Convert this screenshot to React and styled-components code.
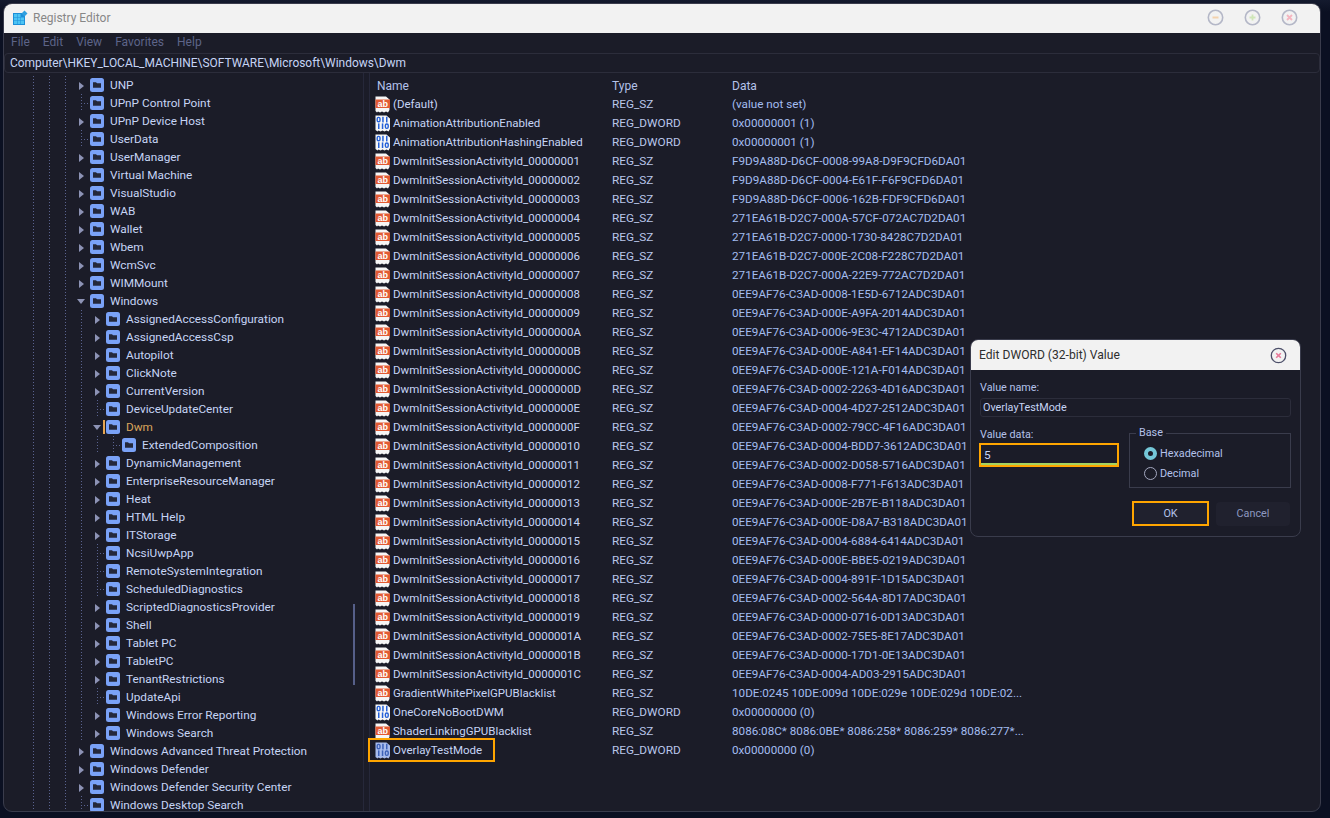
import React from 'react';
import styled, { createGlobalStyle } from 'styled-components';

const GlobalStyle = createGlobalStyle`
  html, body {
    margin: 0;
    height: 100%;
    overflow: hidden;
    background: #0b1022;
  }
  *, *::before, *::after {
    box-sizing: border-box;
  }
`;

const tree = [
  { name: 'UNP', level: 0, arrow: true },
  { name: 'UPnP Control Point', level: 0 },
  { name: 'UPnP Device Host', level: 0, arrow: true },
  { name: 'UserData', level: 0 },
  { name: 'UserManager', level: 0, arrow: true },
  { name: 'Virtual Machine', level: 0, arrow: true },
  { name: 'VisualStudio', level: 0, arrow: true },
  { name: 'WAB', level: 0, arrow: true },
  { name: 'Wallet', level: 0, arrow: true },
  { name: 'Wbem', level: 0, arrow: true },
  { name: 'WcmSvc', level: 0, arrow: true },
  { name: 'WIMMount', level: 0, arrow: true },
  { name: 'Windows', level: 0, open: true },
  { name: 'AssignedAccessConfiguration', level: 1, arrow: true },
  { name: 'AssignedAccessCsp', level: 1, arrow: true },
  { name: 'Autopilot', level: 1, arrow: true },
  { name: 'ClickNote', level: 1, arrow: true },
  { name: 'CurrentVersion', level: 1, arrow: true },
  { name: 'DeviceUpdateCenter', level: 1 },
  { name: 'Dwm', level: 1, open: true, active: true },
  { name: 'ExtendedComposition', level: 2 },
  { name: 'DynamicManagement', level: 1, arrow: true },
  { name: 'EnterpriseResourceManager', level: 1, arrow: true },
  { name: 'Heat', level: 1, arrow: true },
  { name: 'HTML Help', level: 1, arrow: true },
  { name: 'ITStorage', level: 1, arrow: true },
  { name: 'NcsiUwpApp', level: 1 },
  { name: 'RemoteSystemIntegration', level: 1 },
  { name: 'ScheduledDiagnostics', level: 1 },
  { name: 'ScriptedDiagnosticsProvider', level: 1, arrow: true },
  { name: 'Shell', level: 1, arrow: true },
  { name: 'Tablet PC', level: 1, arrow: true },
  { name: 'TabletPC', level: 1, arrow: true },
  { name: 'TenantRestrictions', level: 1, arrow: true },
  { name: 'UpdateApi', level: 1 },
  { name: 'Windows Error Reporting', level: 1, arrow: true },
  { name: 'Windows Search', level: 1, arrow: true },
  { name: 'Windows Advanced Threat Protection', level: 0, arrow: true },
  { name: 'Windows Defender', level: 0, arrow: true },
  { name: 'Windows Defender Security Center', level: 0, arrow: true },
  { name: 'Windows Desktop Search', level: 0 },
];

const session = [
  ['00000001', 'F9D9A88D-D6CF-0008-99A8-D9F9CFD6DA01'],
  ['00000002', 'F9D9A88D-D6CF-0004-E61F-F6F9CFD6DA01'],
  ['00000003', 'F9D9A88D-D6CF-0006-162B-FDF9CFD6DA01'],
  ['00000004', '271EA61B-D2C7-000A-57CF-072AC7D2DA01'],
  ['00000005', '271EA61B-D2C7-0000-1730-8428C7D2DA01'],
  ['00000006', '271EA61B-D2C7-000E-2C08-F228C7D2DA01'],
  ['00000007', '271EA61B-D2C7-000A-22E9-772AC7D2DA01'],
  ['00000008', '0EE9AF76-C3AD-0008-1E5D-6712ADC3DA01'],
  ['00000009', '0EE9AF76-C3AD-000E-A9FA-2014ADC3DA01'],
  ['0000000A', '0EE9AF76-C3AD-0006-9E3C-4712ADC3DA01'],
  ['0000000B', '0EE9AF76-C3AD-000E-A841-EF14ADC3DA01'],
  ['0000000C', '0EE9AF76-C3AD-000E-121A-F014ADC3DA01'],
  ['0000000D', '0EE9AF76-C3AD-0002-2263-4D16ADC3DA01'],
  ['0000000E', '0EE9AF76-C3AD-0004-4D27-2512ADC3DA01'],
  ['0000000F', '0EE9AF76-C3AD-0002-79CC-4F16ADC3DA01'],
  ['00000010', '0EE9AF76-C3AD-0004-BDD7-3612ADC3DA01'],
  ['00000011', '0EE9AF76-C3AD-0002-D058-5716ADC3DA01'],
  ['00000012', '0EE9AF76-C3AD-0008-F771-F613ADC3DA01'],
  ['00000013', '0EE9AF76-C3AD-000E-2B7E-B118ADC3DA01'],
  ['00000014', '0EE9AF76-C3AD-000E-D8A7-B318ADC3DA01'],
  ['00000015', '0EE9AF76-C3AD-0004-6884-6414ADC3DA01'],
  ['00000016', '0EE9AF76-C3AD-000E-BBE5-0219ADC3DA01'],
  ['00000017', '0EE9AF76-C3AD-0004-891F-1D15ADC3DA01'],
  ['00000018', '0EE9AF76-C3AD-0002-564A-8D17ADC3DA01'],
  ['00000019', '0EE9AF76-C3AD-0000-0716-0D13ADC3DA01'],
  ['0000001A', '0EE9AF76-C3AD-0002-75E5-8E17ADC3DA01'],
  ['0000001B', '0EE9AF76-C3AD-0000-17D1-0E13ADC3DA01'],
  ['0000001C', '0EE9AF76-C3AD-0004-AD03-2915ADC3DA01'],
];

const values = [
  { name: '(Default)', type: 'REG_SZ', data: '(value not set)' },
  { name: 'AnimationAttributionEnabled', type: 'REG_DWORD', data: '0x00000001 (1)' },
  { name: 'AnimationAttributionHashingEnabled', type: 'REG_DWORD', data: '0x00000001 (1)' },
  ...session.map(([id, data]) => ({
    name: `DwmInitSessionActivityId_${id}`,
    type: 'REG_SZ',
    data,
  })),
  {
    name: 'GradientWhitePixelGPUBlacklist',
    type: 'REG_SZ',
    data: '10DE:0245 10DE:009d 10DE:029e 10DE:029d 10DE:02...',
  },
  { name: 'OneCoreNoBootDWM', type: 'REG_DWORD', data: '0x00000000 (0)' },
  {
    name: 'ShaderLinkingGPUBlacklist',
    type: 'REG_SZ',
    data: '8086:08C* 8086:0BE* 8086:258* 8086:259* 8086:277*...',
  },
  { name: 'OverlayTestMode', type: 'REG_DWORD', data: '0x00000000 (0)', selected: true },
];

const AppIcon = () => (
  <svg width="16" height="16" viewBox="0 0 16 16">
    <rect x="1" y="3" width="12" height="12" fill="#1c8fd8" />
    <g fill="#4cc4f4">
      <rect x="2" y="4" width="3" height="3" />
      <rect x="5.5" y="4" width="3" height="3" />
      <rect x="2" y="7.5" width="3" height="3" />
      <rect x="5.5" y="7.5" width="3" height="3" />
      <rect x="9" y="7.5" width="3" height="3" />
      <rect x="2" y="11" width="3" height="3" />
      <rect x="5.5" y="11" width="3" height="3" />
      <rect x="9" y="11" width="3" height="3" />
    </g>
    <path d="M12.5 0.5l3 3-3 3-3-3z" fill="#2f9fe0" />
  </svg>
);

const FolderIcon = () => (
  <svg width="14" height="14" viewBox="0 0 14 14">
    <rect x="0" y="0" width="14" height="14" rx="2.5" fill="#7aa2f7" />
    <path d="M3 4.2h3l1 1h4v4.6H3z" fill="#24283b" />
  </svg>
);

const StringIcon = () => (
  <svg width="16" height="17" viewBox="0 0 16 17">
    <path d="M0.5 0.5h10.5l3.5 3V14l-1.5 2.5-2-1-2 1-2-1-2 1-2-1-1 1-1.5-1.5z" fill="#f6f6f6" />
    <rect x="0.5" y="3.5" width="14.5" height="8.5" fill="#e25a33" />
    <AbLabel x="7.8" y="10.6">ab</AbLabel>
  </svg>
);

const BinaryIcon = ({ selected }) => {
  const ink = selected ? '#3d62b8' : '#2460d8';
  return (
    <svg width="16" height="17" viewBox="0 0 16 17">
      <path
        d="M0.5 0.5h11l3.5 3V14l-1.5 2.5-2-1-2 1-2-1-2 1-2-1-1 1-2-1.5z"
        fill={selected ? '#a8bcec' : '#f6f6f6'}
      />
      <g fill="none" stroke={ink} strokeWidth="1.4">
        <rect x="2.2" y="2.4" width="2.8" height="4.4" rx="1.3" />
        <rect x="10.4" y="9" width="2.8" height="4.4" rx="1.3" />
      </g>
      <g fill={ink}>
        <rect x="7.2" y="1.8" width="1.5" height="5.6" />
        <rect x="11" y="1.8" width="1.5" height="5.6" />
        <rect x="3" y="8.4" width="1.5" height="5.6" />
        <rect x="6.8" y="8.4" width="1.5" height="5.6" />
      </g>
    </svg>
  );
};

const WindowButton = ({ kind }) => (
  <svg width="17" height="17" viewBox="0 0 17 17">
    <circle cx="8.5" cy="8.5" r="7.2" fill="none" stroke="#b4b7c7" strokeWidth="1.6" />
    {kind === 'min' && <path d="M5.5 8.5h6" stroke="#f3d2ad" strokeWidth="1.8" />}
    {kind === 'max' && <path d="M5.5 8.5h6M8.5 5.5v6" stroke="#cfe6b8" strokeWidth="1.8" />}
    {kind === 'close' && <path d="M6 6l5 5M11 6l-5 5" stroke="#f5b5c0" strokeWidth="1.8" />}
  </svg>
);

const DialogClose = () => (
  <svg width="17" height="17" viewBox="0 0 17 17">
    <circle cx="8.5" cy="8.5" r="7.2" fill="none" stroke="#4c4f69" strokeWidth="1.3" />
    <path d="M6.2 6.2l4.6 4.6M10.8 6.2l-4.6 4.6" stroke="#e8799a" strokeWidth="1.6" />
  </svg>
);

const TreeItem = ({ item }) => {
  const guides = Array.from({ length: item.level + 3 });
  return (
    <TreeRow>
      {guides.map((_, i) => (
        <Guide key={i} />
      ))}
      {item.arrow && (
        <Expander>
          <ClosedArrow />
        </Expander>
      )}
      {item.open && (
        <Expander>
          <OpenArrow />
        </Expander>
      )}
      {!item.arrow && !item.open && <Branch />}
      <FolderSlot $active={item.active}>
        <FolderIcon />
      </FolderSlot>
      <TreeLabel $active={item.active}>{item.name}</TreeLabel>
    </TreeRow>
  );
};

export default function App() {
  return (
    <Desktop>
      <GlobalStyle />
      <Window>
        <TitleBar>
          <AppIcon />
          <TitleText>Registry Editor</TitleText>
          <WindowButtons>
            <WindowButton kind="min" />
            <WindowButton kind="max" />
            <WindowButton kind="close" />
          </WindowButtons>
        </TitleBar>
        <MenuBar>
          <MenuItem>File</MenuItem>
          <MenuItem>Edit</MenuItem>
          <MenuItem>View</MenuItem>
          <MenuItem>Favorites</MenuItem>
          <MenuItem>Help</MenuItem>
        </MenuBar>
        <AddressBar>Computer\HKEY_LOCAL_MACHINE\SOFTWARE\Microsoft\Windows\Dwm</AddressBar>
        <Panes>
          <TreePane>
            {tree.map((item) => (
              <TreeItem key={item.name} item={item} />
            ))}
            <TreeScrollThumb />
          </TreePane>
          <ListPane>
            <ListHeader>
              <HeaderName>Name</HeaderName>
              <span>Type</span>
              <span>Data</span>
            </ListHeader>
            {values.map((value) => (
              <ValueRow key={value.name}>
                <ValueName $selected={value.selected}>
                  <ValueIcon>
                    {value.type === 'REG_SZ' ? (
                      <StringIcon />
                    ) : (
                      <BinaryIcon selected={value.selected} />
                    )}
                  </ValueIcon>
                  {value.name}
                </ValueName>
                <ValueType>{value.type}</ValueType>
                <ValueData>{value.data}</ValueData>
              </ValueRow>
            ))}
          </ListPane>
        </Panes>
        <Dialog>
          <DialogTitle>
            Edit DWORD (32-bit) Value
            <DialogClose />
          </DialogTitle>
          <DialogBody>
            <FieldLabel>Value name:</FieldLabel>
            <NameField>OverlayTestMode</NameField>
            <DataRow>
              <DataColumn>
                <FieldLabel>Value data:</FieldLabel>
                <DataField>5</DataField>
              </DataColumn>
              <BaseGroup>
                <BaseLegend>Base</BaseLegend>
                <RadioRow>
                  <Radio $checked />
                  Hexadecimal
                </RadioRow>
                <RadioRow>
                  <Radio />
                  Decimal
                </RadioRow>
              </BaseGroup>
            </DataRow>
            <DialogActions>
              <OkButton>OK</OkButton>
              <CancelButton>Cancel</CancelButton>
            </DialogActions>
          </DialogBody>
        </Dialog>
      </Window>
    </Desktop>
  );
}

const uiFont = `Roboto, "Open Sans", "Liberation Sans", sans-serif`;

const Desktop = styled.div`
  width: 1330px;
  height: 818px;
  padding: 3px 9px 6px 3px;
  background: linear-gradient(180deg, #141a2e 0, #0b1022 12px);
  font-family: ${uiFont};
  font-size: 11.8px;
`;

const Window = styled.div`
  position: relative;
  height: 100%;
  display: flex;
  flex-direction: column;
  background: #1b1c28;
  border: 1px solid #3a3c4c;
  border-radius: 9px;
  overflow: hidden;
`;

const TitleBar = styled.div`
  flex: none;
  height: 29px;
  display: flex;
  align-items: center;
  gap: 5px;
  padding: 0 0 2px 8px;
  background: #f2f2f2;
`;

const TitleText = styled.span`
  color: #878787;
  font-size: 12px;
`;

const WindowButtons = styled.div`
  margin-left: auto;
  margin-right: 22px;
  display: flex;
  gap: 20px;
`;

const MenuBar = styled.div`
  flex: none;
  height: 20px;
  display: flex;
  align-items: center;
  gap: 13px;
  padding: 0 0 2px 7px;
`;

const MenuItem = styled.span`
  color: #5d6488;
  font-size: 12px;
`;

const AddressBar = styled.div`
  flex: none;
  height: 20px;
  line-height: 19px;
  padding-left: 5px;
  color: #c6d4f5;
  font-size: 11.95px;
  border: 1px solid #2c2d3b;
  border-radius: 4px;
`;

const Panes = styled.div`
  flex: 1;
  min-height: 0;
  display: grid;
  grid-template-columns: 360px 1fr;
  column-gap: 5px;
`;

const TreePane = styled.div`
  position: relative;
  overflow: hidden;
  padding: 3px 0 0 21px;
  border-right: 1px solid #26283a;
`;

const TreeScrollThumb = styled.div`
  position: absolute;
  top: 531px;
  right: 8px;
  width: 2px;
  height: 81px;
  background: #565f89;
`;

const TreeRow = styled.div`
  display: flex;
  align-items: center;
  height: 18px;
`;

const dots = `repeating-linear-gradient(180deg, #5a6390 0 1px, transparent 1px 3px)`;

const Guide = styled.span`
  flex: none;
  width: 16px;
  height: 18px;
  background: ${dots} 8px 0 / 1px 100% no-repeat;
`;

const Expander = styled.span`
  flex: none;
  width: 16px;
  height: 18px;
  display: flex;
  align-items: center;
  justify-content: center;
`;

const ClosedArrow = styled.span`
  width: 0;
  height: 0;
  margin-top: 2px;
  border-left: 5px solid #8d93b5;
  border-top: 4px solid transparent;
  border-bottom: 4px solid transparent;
`;

const OpenArrow = styled.span`
  width: 0;
  height: 0;
  border-top: 5px solid #8d93b5;
  border-left: 4px solid transparent;
  border-right: 4px solid transparent;
`;

const Branch = styled.span`
  flex: none;
  width: 16px;
  height: 18px;
  background:
    ${dots} 8px 0 / 1px 100% no-repeat,
    repeating-linear-gradient(90deg, #5a6390 0 1px, transparent 1px 3px) 8px 9px / 8px 1px no-repeat;
`;

const FolderSlot = styled.span`
  position: relative;
  flex: none;
  display: flex;
  margin-left: 1px;

  &::before {
    content: ${(p) => (p.$active ? '""' : 'none')};
    position: absolute;
    left: -3px;
    top: 0;
    width: 2px;
    height: 14px;
    background: #e8a64f;
  }
`;

const TreeLabel = styled.span`
  margin-left: 6px;
  white-space: nowrap;
  color: ${(p) => (p.$active ? '#d9a45c' : '#c6d4f5')};
`;

const ListPane = styled.div`
  padding: 3px 0 0 5px;
  border-left: 1px solid #26283a;
`;

const ListHeader = styled.div`
  display: grid;
  grid-template-columns: 237px 120px 1fr;
  align-items: center;
  height: 19px;
  color: #b4c2ea;
  font-size: 12px;
`;

const HeaderName = styled.span`
  padding-left: 2px;
`;

const ValueRow = styled.div`
  display: grid;
  grid-template-columns: 237px 120px 1fr;
  align-items: center;
  height: 19px;
  padding-bottom: 2px;
  white-space: nowrap;
`;

const ValueName = styled.span`
  position: relative;
  display: flex;
  align-items: center;
  gap: 2px;
  color: #c6d4f5;
  font-size: 11.5px;

  &::after {
    content: ${(p) => (p.$selected ? '""' : 'none')};
    position: absolute;
    left: -7px;
    top: -3px;
    width: 127px;
    height: 24px;
    border: 2px solid #ffa500;
  }
`;

const ValueIcon = styled.span`
  flex: none;
  display: flex;
  margin: 1px 0 -1px;
`;

const AbLabel = styled.text`
  font-family: "Liberation Sans", sans-serif;
  font-size: 9px;
  font-weight: 700;
  fill: #fff;
  text-anchor: middle;
`;

const ValueType = styled.span`
  color: #b9c6ea;
`;

const ValueData = styled.span`
  color: #a3bcf0;
  font-size: 11.7px;
`;

const Dialog = styled.div`
  position: absolute;
  left: 966px;
  top: 335px;
  width: 331px;
  height: 198px;
  display: flex;
  flex-direction: column;
  background: #1b1c28;
  border: 1px solid #3a3c4c;
  border-radius: 8px;
  overflow: hidden;
  font-size: 10.8px;
`;

const DialogTitle = styled.div`
  flex: none;
  height: 30px;
  display: flex;
  align-items: center;
  justify-content: space-between;
  padding: 0 13px 0 8px;
  background: #f2f2f2;
  color: #2e2e2e;
  font-size: 12.1px;
`;

const DialogBody = styled.div`
  flex: 1;
  display: flex;
  flex-direction: column;
  padding: 10px 9px 0 9px;
`;

const FieldLabel = styled.div`
  color: #b4c2ea;
  line-height: 16px;
`;

const NameField = styled.div`
  height: 19px;
  margin-top: 2px;
  padding-left: 2px;
  line-height: 18px;
  color: #c6d4f5;
  border: 1px solid #2c2d3b;
  border-radius: 3px;
`;

const DataRow = styled.div`
  display: grid;
  grid-template-columns: 140px 162px;
  column-gap: 10px;
  margin-top: 8px;
  margin-left: -1px;
`;

const DataColumn = styled.div`
  padding-left: 1px;
  padding-top: 2px;
`;

const DataField = styled.div`
  width: 140px;
  height: 24px;
  margin-left: -1px;
  padding-left: 3px;
  line-height: 20px;
  color: #c6d4f5;
  font-size: 11.8px;
  border: 2px solid #ffa500;
  background: linear-gradient(#a6d35f, #a6d35f) 0 100% / 100% 2px no-repeat;
`;

const BaseGroup = styled.div`
  position: relative;
  height: 55px;
  margin-top: 8px;
  padding: 9px 0 0 14px;
  border: 1px solid #3a3c4c;
`;

const BaseLegend = styled.span`
  position: absolute;
  top: -8px;
  left: 6px;
  padding: 0 3px;
  background: #1b1c28;
  color: #b4c2ea;
`;

const RadioRow = styled.div`
  display: flex;
  align-items: center;
  gap: 3px;
  height: 20px;
  color: #b4c2ea;
`;

const Radio = styled.span`
  width: 13px;
  height: 13px;
  border-radius: 50%;
  border: ${(p) => (p.$checked ? '4px solid #74c7d8' : '1px solid #a4a8c0')};
  background: #1b1c28;
`;

const DialogActions = styled.div`
  display: flex;
  justify-content: flex-end;
  gap: 7px;
  margin-top: 13px;
  margin-right: 1px;
`;

const OkButton = styled.div`
  width: 77px;
  height: 25px;
  line-height: 22px;
  text-align: center;
  color: #b4c2ea;
  background: #20212e;
  border: 2px solid #ffa500;
`;

const CancelButton = styled.div`
  width: 74px;
  height: 24px;
  margin-top: 1px;
  line-height: 24px;
  text-align: center;
  color: #8d98c0;
  background: #20212e;
  border-radius: 4px;
`;
